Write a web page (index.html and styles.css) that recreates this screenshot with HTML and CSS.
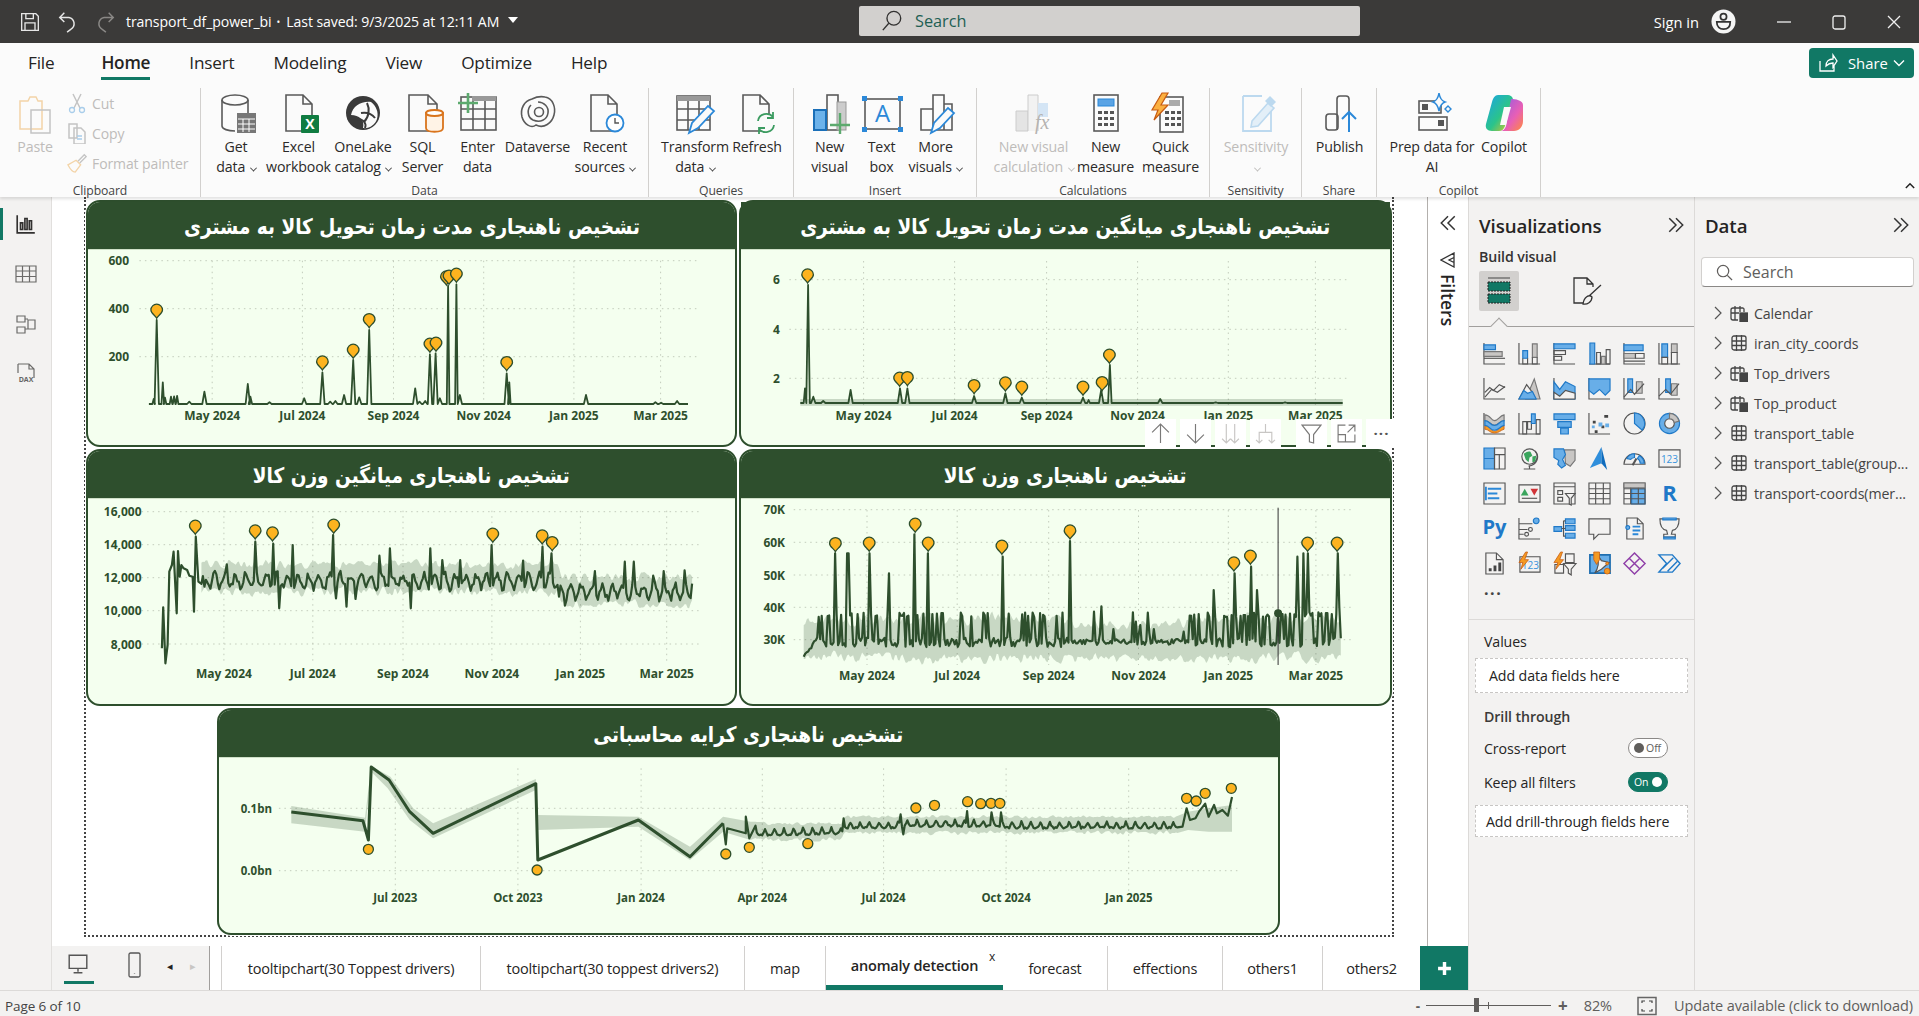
FILE: index.html
```html
<!DOCTYPE html>
<html lang="en">
<head>
<meta charset="utf-8">
<title>transport_df_power_bi</title>
<link rel="stylesheet" href="styles.css">
</head>
<body>
<div class="app">
  <header class="titlebar">
    <svg class="tb-ic" viewBox="0 0 24 24"><path d="M2 2h17l3 3v17H2zM7 2v6h9V2M6 22v-9h12v9"/></svg>
    <svg class="tb-ic undo" viewBox="0 0 24 24"><path d="M8 2 3 7l5 5M3 7h10a7 7 0 0 1 2 13l-4 3"/></svg>
    <svg class="tb-ic redo" viewBox="0 0 24 24"><path d="m16 2 5 5-5 5M21 7H11a7 7 0 0 0-2 13l4 3"/></svg>
    <span class="doc-title">transport_df_power_bi</span>
    <span class="doc-dot">•</span>
    <span class="doc-title">Last saved: 9/3/2025 at 12:11 AM</span>
    <span class="doc-caret"></span>
    <div class="searchbar">
      <svg viewBox="0 0 24 24"><circle cx="14" cy="9" r="7.500"/><path d="M8.500 14.500 2 22"/></svg>
      <span>Search</span>
    </div>
    <span class="signin">Sign in</span>
    <svg class="avatar" viewBox="0 0 26 26"><circle cx="13" cy="13" r="12.500" class="av-bg"/><circle cx="13" cy="8" r="3.200"/><path d="M6 13.500h14c0 5-3 7.500-7 7.500s-7-2.500-7-7.500z"/></svg>
    <svg class="win-ic win-min" viewBox="0 0 16 16"><path d="M1 8h14"/></svg>
    <svg class="win-ic win-max" viewBox="0 0 16 16"><rect x="2" y="2" width="12" height="13" rx="2"/></svg>
    <svg class="win-ic win-close" viewBox="0 0 16 16"><path d="m2 2 12 12M14 2 2 14"/></svg>
  </header>

  <section class="ribbon">
    <nav class="rtabs">
      <span class="rtab rtab-file">File</span>
      <span class="rtab rtab-on">Home</span>
      <span class="rtab">Insert</span>
      <span class="rtab">Modeling</span>
      <span class="rtab">View</span>
      <span class="rtab">Optimize</span>
      <span class="rtab">Help</span>
      <button class="share">
        <svg viewBox="0 0 20 20"><path d="M2 8v10h14v-5M8 13c0-5 3-7 7-7V2l4 6-4 6v-4c-3 0-5 1-7 3z"/></svg>
        <span>Share</span>
        <svg class="share-chev" viewBox="0 0 12 12"><path d="m1 3.500 5 5 5-5"/></svg>
      </button>
    </nav>
    <div class="rgroups">
      <div class="rgroup g-clip">
        <div class="ritems clip-items">
          <div class="rbtn off paste">
            <svg class="ric" viewBox="0 0 40 40"><path class="ln-o" d="M5 8h8l2-4h6l2 4h4v28H5z" fill="#fdf0dc"/><rect class="ln-gl" x="16" y="17" width="19" height="23" fill="#fafafa"/></svg>
            <span class="rl">Paste</span>
          </div>
          <div class="clip-list">
            <div class="clip-row"><svg viewBox="0 0 20 22"><path class="ln-gl" d="m6 2 7 14M14 2 7 16"/><circle class="ln-bl" cx="5" cy="18" r="2.500"/><circle class="ln-bl" cx="15" cy="18" r="2.500"/></svg><span>Cut</span></div>
            <div class="clip-row"><svg viewBox="0 0 20 22"><path class="ln-gl" d="M2 2h8v14H2z"/><path class="ln-gl" d="M7 6h7l4 4v12H7z" fill="#fafafa"/><path class="ln-bl" d="M10 14h5M10 17h5"/></svg><span>Copy</span></div>
            <div class="clip-row"><svg viewBox="0 0 22 22"><path class="ln-gl" d="m12 9 7-7 2 2-7 7"/><path class="ln-o" d="M1 13 10 8l5 5-6 8c-4 0-6-4-8-8z" fill="#fbdcb8"/></svg><span>Format painter</span></div>
          </div>
        </div>
        <div class="rglabel">Clipboard</div>
      </div>

      <div class="rgroup g-data">
        <div class="ritems">
          <div class="rbtn"><svg class="ric" viewBox="0 0 40 40"><ellipse class="ln" cx="19" cy="7" rx="13" ry="5"/><path class="ln" d="M6 7v26c0 3 6 5 13 5M32 7v13"/><rect x="21" y="20" width="19" height="20" fill="#777"/><path d="M22 26h17M22 31h17M22 36h17M27 26v13M33 26v13" stroke="#fff" stroke-width="1"/></svg><span class="rl">Get</span><span class="rl">data <i class="chev"></i></span></div>
          <div class="rbtn"><svg class="ric" viewBox="0 0 40 40"><path class="ln" d="M7 2h17l9 9v27H7zM24 2v9h9" fill="#fafafa"/><rect x="22" y="22" width="18" height="18" rx="1" fill="#107c41"/><text class="xl" x="31" y="36">X</text></svg><span class="rl">Excel</span><span class="rl">workbook</span></div>
          <div class="rbtn"><svg class="ric" viewBox="0 0 40 40"><circle cx="20" cy="20" r="17" fill="#3a3a3a"/><path d="M8 22c2-9 10-14 20-13 5 4 8 10 6 17-2 6-8 10-14 9 2-8-4-13-12-13z" fill="#fafafa"/><path d="M14 26c6 0 10 4 8 9M24 10c3 6 2 14-3 19M32 25c-3-4-8-6-14-5" fill="none" stroke="#3a3a3a" stroke-width="2"/></svg><span class="rl">OneLake</span><span class="rl">catalog <i class="chev"></i></span></div>
          <div class="rbtn"><svg class="ric" viewBox="0 0 40 40"><path class="ln" d="M6 2h19l9 9v27H6zM25 2v9h9" fill="#fafafa"/><path d="M23 20v15c0 5 17 5 17 0V20z" fill="#fff3e6" stroke="#d9741c" stroke-width="1.800"/><ellipse cx="31.500" cy="20" rx="8.500" ry="3" fill="#fff" stroke="#d9741c" stroke-width="1.800"/></svg><span class="rl">SQL</span><span class="rl">Server</span></div>
          <div class="rbtn"><svg class="ric" viewBox="0 0 40 40"><rect class="ln" x="3" y="4" width="35" height="33" fill="#fafafa"/><rect x="14" y="3" width="24" height="5" fill="#999"/><path class="ln" d="M3 16h35M3 26h35M15 8v29M27 8v29"/><path d="M10 0v20M0 10h20" stroke="#5caa6e" stroke-width="2.600" fill="none"/></svg><span class="rl">Enter</span><span class="rl">data</span></div>
          <div class="rbtn"><svg class="ric" viewBox="0 0 40 40"><path class="ln" stroke-width="2" d="M14 6C6 8 2 16 4 24c2 7 9 12 14 8 8 4 16-2 18-10 2-7-1-17-9-18-5-1-9 0-13 2z"/><path class="ln" stroke-width="2" d="M13 12c-4 4-4 12 2 15 7 3 14 0 15-7 1-6-4-11-10-11"/><circle class="ln" stroke-width="2" cx="21" cy="19" r="4.500"/></svg><span class="rl">Dataverse</span></div>
          <div class="rbtn"><svg class="ric" viewBox="0 0 40 40"><path class="ln" d="M6 2h17l9 9v27H6zM23 2v9h9" fill="#fafafa"/><circle cx="30" cy="30" r="8.500" fill="#fff" stroke="#2b88d8" stroke-width="1.800"/><path d="M30 25v5h4" fill="none" stroke="#555" stroke-width="1.400"/></svg><span class="rl">Recent</span><span class="rl">sources <i class="chev"></i></span></div>
        </div>
        <div class="rglabel">Data</div>
      </div>

      <div class="rgroup g-query">
        <div class="ritems">
          <div class="rbtn"><svg class="ric" viewBox="0 0 40 40"><rect class="ln" x="2" y="3" width="33" height="34"/><rect x="2" y="3" width="33" height="5" fill="#999"/><path class="ln" d="M2 16h33M2 27h33M13 8v29M24 8v29"/><path d="m14 40 3-10 16-17 6 5-16 17z" fill="#fafafa" stroke="#2b88d8" stroke-width="1.800"/></svg><span class="rl">Transform</span><span class="rl">data <i class="chev"></i></span></div>
          <div class="rbtn"><svg class="ric" viewBox="0 0 40 40"><path class="ln" d="M6 2h17l9 9v27H6zM23 2v9h9" fill="#fafafa"/><circle cx="29" cy="30" r="9" fill="#fafafa"/><path d="M21 28c1-8 11-9 15-4M37 32c-1 8-11 9-15 4M36 19v6h-6M22 41v-6h6" fill="none" stroke="#3b9b60" stroke-width="1.800"/></svg><span class="rl">Refresh</span></div>
        </div>
        <div class="rglabel">Queries</div>
      </div>

      <div class="rgroup g-insert">
        <div class="ritems">
          <div class="rbtn"><svg class="ric" viewBox="0 0 40 40"><rect x="17" y="2" width="11" height="35" class="ln"/><rect x="27" y="9" width="9" height="28" fill="#ccc" stroke="#999"/><rect x="4" y="17" width="12" height="20" fill="#6cb2ea" stroke="#1a6fb8" stroke-width="2"/><path d="M30 20v21M20 32h20" stroke="#5caa6e" stroke-width="2.400"/></svg><span class="rl">New</span><span class="rl">visual</span></div>
          <div class="rbtn"><svg class="ric" viewBox="0 0 40 40"><rect class="ln" x="3" y="6" width="35" height="30"/><path d="M0 3h5v5H0zM36 3h5v5h-5zM0 34h5v5H0zM36 34h5v5h-5z" fill="#2b88d8"/><text class="tbx" x="20.500" y="29">A</text></svg><span class="rl">Text</span><span class="rl">box</span></div>
          <div class="rbtn"><svg class="ric" viewBox="0 0 40 40"><path class="ln" d="M5 16h12v21H5zM17 37V2h11v35M28 11h8v26H5"/><path d="m15 40 3-10 14-15 6 5-14 15z" fill="#fafafa" stroke="#2b88d8" stroke-width="1.800"/></svg><span class="rl">More</span><span class="rl">visuals <i class="chev"></i></span></div>
        </div>
        <div class="rglabel">Insert</div>
      </div>

      <div class="rgroup g-calc">
        <div class="ritems">
          <div class="rbtn off"><svg class="ric" viewBox="0 0 40 40"><path d="M2 18h12v20H2z" fill="#e4e4e4" stroke="#ccc"/><path d="M14 38V2h10v36" fill="#f2f2f2" stroke="#ccc"/><path d="M24 10h10v14H24z" fill="#d4e5f5"/><text class="fx" x="21" y="36">fx</text></svg><span class="rl">New visual</span><span class="rl">calculation <i class="chev"></i></span></div>
          <div class="rbtn"><svg class="ric" viewBox="0 0 40 40"><rect class="ln" stroke-width="2" x="8" y="2" width="24" height="36"/><rect x="12" y="6" width="16" height="7" fill="#5ba4e5" stroke="#2b88d8"/><path d="M12 18h4v3h-4zM18 18h4v3h-4zM24 18h4v3h-4zM12 24h4v3h-4zM18 24h4v3h-4zM24 24h4v3h-4zM12 30h4v3h-4zM18 30h4v3h-4zM24 30h4v3h-4z" fill="#555"/></svg><span class="rl">New</span><span class="rl">measure</span></div>
          <div class="rbtn"><svg class="ric" viewBox="0 0 40 40"><rect class="ln" stroke-width="2" x="9" y="4" width="23" height="35"/><rect x="18" y="7" width="11" height="6" fill="#aaa"/><path d="M14 18h4v3h-4zM20 18h4v3h-4zM26 18h4v3h-4zM14 24h4v3h-4zM20 24h4v3h-4zM26 24h4v3h-4zM14 30h4v3h-4zM20 30h4v3h-4zM26 30h4v3h-4z" fill="#555"/><path d="M11 0 1 17h6l-4 10L17 12h-7l7-12z" fill="#fbb040" stroke="#c75b12" stroke-width="1.200"/></svg><span class="rl">Quick</span><span class="rl">measure</span></div>
        </div>
        <div class="rglabel">Calculations</div>
      </div>

      <div class="rgroup g-sens">
        <div class="ritems">
          <div class="rbtn off"><svg class="ric" viewBox="0 0 40 40"><path d="M7 3h19M35 18v20H7V3" fill="none" stroke="#bcd9ef" stroke-width="1.800"/><path d="m16 28 16-18 6 5-16 18-7 1z" fill="#e3eff8" stroke="#bcd9ef" stroke-width="1.600"/><path d="m29 8 5-5 6 6-5 5z" fill="#bcd9ef"/></svg><span class="rl">Sensitivity</span><span class="rl"><i class="chev"></i></span></div>
        </div>
        <div class="rglabel">Sensitivity</div>
      </div>

      <div class="rgroup g-share">
        <div class="ritems">
          <div class="rbtn"><svg class="ric" viewBox="0 0 40 40"><path class="ln" stroke-width="2" d="M17 37V6a3 3 0 0 1 3-3h6a3 3 0 0 1 3 3v19"/><rect class="ln" stroke-width="2" x="6" y="21" width="12" height="16" rx="3"/><path d="M29 39V20M22 26l7-7 7 7" fill="none" stroke="#2b88d8" stroke-width="2"/></svg><span class="rl">Publish</span></div>
        </div>
        <div class="rglabel">Share</div>
      </div>

      <div class="rgroup g-copilot">
        <div class="ritems">
          <div class="rbtn"><svg class="ric" viewBox="0 0 40 40"><rect class="ln" x="7" y="8" width="22" height="12"/><rect x="10" y="11" width="6" height="6" fill="#555"/><rect class="ln" x="7" y="24" width="28" height="13"/><rect x="26" y="27" width="6" height="6" fill="#555"/><path d="M27 0c1 6 3 8 6 9-3 1-5 4-6 9-1-5-3-8-6-9 3-1 5-3 6-9z" fill="#fafafa" stroke="#2b88d8" stroke-width="1.500"/><path d="M36 13l3 3-3 3-3-3z" fill="#fafafa" stroke="#2b88d8" stroke-width="1.400"/></svg><span class="rl">Prep data for</span><span class="rl">AI</span></div>
          <div class="rbtn"><svg class="ric" viewBox="0 0 40 40"><defs><linearGradient id="cpA" x1="0" y1="0" x2="1" y2="1"><stop offset="0" stop-color="#1aa3e8"/><stop offset=".55" stop-color="#2bc48a"/><stop offset="1" stop-color="#f5c518"/></linearGradient><linearGradient id="cpB" x1="0" y1="0" x2="1" y2="1"><stop offset="0" stop-color="#8d5be8"/><stop offset=".6" stop-color="#e85fb5"/><stop offset="1" stop-color="#ff8a3c"/></linearGradient></defs><path d="M14 2h10c2 0 4 1 5 4l-8 27c-1 3-3 5-6 5h-7c-5 0-7-3-6-7l6-22c1-4 3-7 6-7z" fill="url(#cpA)"/><path d="M27 6c4 0 12 1 12 6v16c0 6-4 10-9 10H16c3 0 5-2 6-5z" fill="url(#cpB)"/><path d="M20 14h7l-5 18h-6z" fill="#fafafa"/></svg><span class="rl">Copilot</span></div>
        </div>
        <div class="rglabel">Copilot</div>
      </div>
      <svg class="collapse" viewBox="0 0 12 8"><path d="m1 7 5-5 5 5"/></svg>
    </div>
  </section>

  <main class="workspace">
    <aside class="rail">
      <div class="rail-btn rail-on"><svg viewBox="0 0 20 20"><path d="M2 2v16h16M5 15V9h2v6zM9 15V5h2v10zM13 15V7h2v8z"/></svg></div>
      <div class="rail-btn"><svg viewBox="0 0 22 20"><path d="M1 2h20v16H1zM1 7h20M1 12.500h20M7.500 2v16M14.500 2v16"/></svg></div>
      <div class="rail-btn"><svg viewBox="0 0 22 22"><path d="M2 3h8v6H2zM2 14h8v6H2zM13 7h7v9h-7zM10 6h3M10 16h3"/></svg></div>
      <div class="rail-btn"><svg viewBox="0 0 22 24"><path d="M3 2h11l5 5v9M3 2v9M14 2v5h5"/><text class="dax" x="11" y="20">DAX</text></svg></div>
    </aside>

    <div class="center">
      <div class="center-top">
        <div class="canvas">
          <div class="page">
            <article class="card">
              <h2 class="card-title" dir="rtl"><span>تشخیص ناهنجاری مدت زمان تحویل کالا به مشتری</span></h2>
              <svg class="chart" data-chart="delivery"></svg>
            </article>
            <article class="card card-tools">
              <h2 class="card-title" dir="rtl"><span>تشخیص ناهنجاری میانگین مدت زمان تحویل کالا به مشتری</span></h2>
              <svg class="chart" data-chart="avgDelivery"></svg>
              <div class="visual-tools">
                <span class="vt"><svg viewBox="0 0 20 20"><path d="M10 19V1M2 9l8-8 8 8"/></svg></span>
                <span class="vt"><svg viewBox="0 0 20 20"><path d="M10 1v18M2 11l8 8 8-8"/></svg></span>
                <span class="vt vt-off"><svg viewBox="0 0 20 20"><path d="M6 1v18M14 1v18M2 15l4 4 4-4M10 15l4 4 4-4"/></svg></span>
                <span class="vt vt-off vt-last"><svg viewBox="0 0 20 20"><path d="M10 1v8M4 19v-10h12v10M1 16l3 3 3-3M13 16l3 3 3-3"/></svg></span>
                <span class="vt"><svg viewBox="0 0 20 20"><path d="M1 2h18l-7 9v8l-4-1v-7z"/></svg></span>
                <span class="vt"><svg viewBox="0 0 20 20"><path d="M9 2H2v16h16v-7M2 11h7v7M12 2h6v6M18 2l-7 7"/></svg></span>
                <span class="vt vt-more">···</span>
              </div>
            </article>
            <article class="card card-tall">
              <h2 class="card-title" dir="rtl"><span>تشخیص ناهنجاری میانگین وزن کالا</span></h2>
              <svg class="chart" data-chart="avgWeight"></svg>
            </article>
            <article class="card card-tall">
              <h2 class="card-title" dir="rtl"><span>تشخیص ناهنجاری وزن کالا</span></h2>
              <svg class="chart" data-chart="weight"></svg>
            </article>
            <article class="card card-wide">
              <h2 class="card-title" dir="rtl"><span>تشخیص ناهنجاری کرایه محاسباتی</span></h2>
              <svg class="chart" data-chart="fare"></svg>
            </article>
          </div>
        </div>
        <aside class="filters">
          <svg class="dchev" viewBox="0 0 16 16"><path d="M8 2 2 8l6 6M14 2 8 8l6 6"/></svg>
          <svg class="funnel" viewBox="0 0 16 16"><path d="M14 1v14L1 8zM14 5.500 9 8l5 2.500"/></svg>
          <span class="filters-label">Filters</span>
        </aside>
      </div>
      <div class="pagebar">
        <div class="devices">
          <div class="dev dev-on"><svg viewBox="0 0 20 20"><path d="M2 2h16v12H2zM10 14v3M6 18h8"/></svg></div>
          <div class="dev"><svg viewBox="0 0 14 26"><rect x="1.500" y="1" width="11" height="24" rx="1.500"/><path d="M7 21v.5"/></svg></div>
          <span class="pg-arrow">◂</span>
          <span class="pg-arrow pg-arrow-off">▸</span>
        </div>
        <div class="tabs">
          <span class="tab t1">tooltipchart(30 Toppest drivers)</span>
          <span class="tab t2">tooltipchart(30 toppest drivers2)</span>
          <span class="tab t3">map</span>
          <span class="tab t4 tab-on">anomaly detection<i class="tab-x">x</i></span>
          <span class="tab t5">forecast</span>
          <span class="tab t6">effections</span>
          <span class="tab t7">others1</span>
          <span class="tab t8">others2</span>
        </div>
        <div class="addtab"><svg viewBox="0 0 14 14"><path d="M7 1v12M1 7h12"/></svg></div>
      </div>
    </div>

    <aside class="viz">
      <div class="pane-head"><h3>Visualizations</h3><svg class="dchev" viewBox="0 0 16 16"><path d="m8 2 6 6-6 6M2 2l6 6-6 6"/></svg></div>
      <div class="build-label">Build visual</div>
      <div class="build-row">
        <span class="build-btn build-on"><svg viewBox="0 0 32 32"><path d="M5 3h22" stroke="#444" fill="none"/><rect x="5" y="7" width="22" height="9" fill="#117865" stroke="#222" stroke-dasharray="2 1"/><rect x="5" y="19" width="22" height="9" fill="#117865" stroke="#222" stroke-dasharray="2 1"/></svg></span>
        <span class="build-btn build-fmt"><svg viewBox="0 0 32 32"><path d="M12 28H3V3h13l6 6v3M16 3v6h6" fill="none" stroke="#333" stroke-width="1.300"/><path d="m30 10-12 11M21 22c-3-3-8 0-9 7 4 1 9-2 9-7z" fill="none" stroke="#333" stroke-width="1.300"/></svg></span>
      </div>
      <div class="viz-rule"></div>
      <div class="viz-grid">
        <svg class="vi" viewBox="0 0 24 24"><path d="M1 1v22h22"/><path class="b" d="M1 3h12v5H1z"/><path class="g" d="M1 10h19v5H1z"/><path d="M1 17h22"/></svg>
        <svg class="vi" viewBox="0 0 24 24"><path d="M1 1v22h22"/><path class="b" d="M5 9h5v8H5z"/><path d="M5 17v6h5v-6"/><path class="g" d="M15 2h5v14h-5z"/><path d="M15 16v7h5v-7"/></svg>
        <svg class="vi" viewBox="0 0 24 24"><path d="M1 1v22h22"/><path class="b" d="M1 2h22v5H1z"/><path d="M1 9h12v4H1zM1 15h8v4H1z"/></svg>
        <svg class="vi" viewBox="0 0 24 24"><path d="M1 23h22"/><path class="b" d="M2 1h5v22H2z"/><path d="M9 11h4v12H9z"/><path class="g" d="M14 15h4v8h-4z"/><path d="M19 8h4v15h-4z"/></svg>
        <svg class="vi" viewBox="0 0 24 24"><path d="M1 1v22h22"/><path class="b" d="M1 3h20v6H1z"/><path class="g" d="M1 12h12v5H1z"/><path d="M13 12h9v5h-9zM1 20h22"/></svg>
        <svg class="vi" viewBox="0 0 24 24"><path d="M1 1v22h22"/><path class="b" d="M4 2h6v14H4z"/><path d="M4 16h6v7H4z"/><path class="g" d="M14 2h6v9h-6z"/><path d="M14 11h6v12h-6z"/></svg>

        <svg class="vi" viewBox="0 0 24 24"><path d="M1 1v22h22M2 16l5-5 4 3 6-6 6 3"/><path d="M2 21l7-8 6 3 8-6"/></svg>
        <svg class="vi" viewBox="0 0 24 24"><path class="g" d="M8 23 17 2l6 21z"/><path class="w" d="M1 23 9 8l6 8 3 7z"/><path class="b" d="M1 23l5-9 4 3 5-2 4 8z"/></svg>
        <svg class="vi" viewBox="0 0 24 24"><path d="M1 1v22h22"/><path class="b" d="M1 5l6 8 6-8 10 5v13H1z"/><path class="w" d="M1 16l6 4 6-6 10 3v6H1z"/></svg>
        <svg class="vi" viewBox="0 0 24 24"><path d="M1 1v22h22"/><path class="b" d="M1 2h22v12l-5 5-6-6-6 5-5-4z"/></svg>
        <svg class="vi" viewBox="0 0 24 24"><path d="M1 1v22h22"/><path class="b" d="M5 2h5v14H5z"/><path class="g" d="M14 5h6v12h-6z"/><path d="M1 21l7-8 4 5 10-11"/></svg>
        <svg class="vi" viewBox="0 0 24 24"><path d="M1 1v22h22"/><path class="b" d="M8 2h5v14H8z"/><path class="g" d="M14 7h6v12h-6z"/><path d="M1 20l7-7 5 5 9-11"/></svg>

        <svg class="vi" viewBox="0 0 24 24"><path d="M1 1v22h22"/><path class="o" d="M2 14c5 0 5 6 10 6s5-5 10-6v4c-4 1-5 4-10 4s-6-4-10-4z"/><path class="g" d="M2 3c6 0 6 6 10 6s5-5 10-6v6c-5 0-6 5-10 5s-5-5-10-5z"/><path class="b" d="M2 9c5 0 5 5 10 5s5-5 10-5v5c-5 1-5 5-10 5s-5-5-10-5z"/></svg>
        <svg class="vi" viewBox="0 0 24 24"><path d="M1 1v22h22"/><path d="M5 10h4v13H5zM10 10h4v8h-4zM19 8h4v15h-4z"/><path class="b" d="M14 2h4v10h-4z"/></svg>
        <svg class="vi" viewBox="0 0 24 24"><path class="b" d="M1 2h22v6H1zM5 10h14v6H5zM8 17h8v6H8z"/></svg>
        <svg class="vi" viewBox="0 0 24 24"><path d="M1 1v22h22"/><path class="sq" d="M5 9h3v3H5zM14 14h3v3h-3zM17 3h4v3h-4zM7 19h3v3H7z"/><path class="bf" d="M11 11h4v4h-4zM18 12h4v4h-4zM4 14h3v3H4z"/></svg>
        <svg class="vi" viewBox="0 0 24 24"><circle cx="12" cy="12" r="11"/><path class="b" d="M12 12V1a11 11 0 0 1 8 18z"/></svg>
        <svg class="vi" viewBox="0 0 24 24"><circle class="b" cx="12" cy="12" r="10.500"/><circle class="w" cx="12" cy="12" r="5"/><path class="g" d="M12 1.500a10.500 10.500 0 0 1 10 8l-5 1.500a5 5 0 0 0-5-4z"/></svg>

        <svg class="vi" viewBox="0 0 24 24"><path class="b" d="M1 1h11v11H1zM1 12h11v11H1z"/><path d="M12 1h11v7H12zM12 8h5v15h-5zM17 8h6v15h-6z"/></svg>
        <svg class="vi" viewBox="0 0 24 24"><circle cx="12" cy="10" r="8"/><path class="gr" d="M6 7c3-2 5-3 7-2l2 4-3 2-1 5-3-3z"/><path class="gr" d="m15 10 4-1-1 6-3 1z"/><path d="M6 23h12M12 19v4M18 4c5 6 2 15-7 16"/></svg>
        <svg class="vi" viewBox="0 0 24 24"><path class="g" d="M12 3h11v11l-5 6-5-3z"/><path class="b" d="M1 2h10l2 6-3 5 3 6-4 3-4-4 1-4-5-3z"/></svg>
        <svg class="vi" viewBox="0 0 24 24"><path class="az1" d="M14 0 2 22l12-5z"/><path class="az2" d="M14 0v17l6 7z"/></svg>
        <svg class="vi" viewBox="0 0 24 24"><path d="M1 18a11 11 0 0 1 22 0H1z"/><path class="b" d="M4 12a9 9 0 0 1 8-5V11a6 6 0 0 0-4 2z"/><path class="b" d="M17 9a9 9 0 0 1 5 8h-4a6 6 0 0 0-3-5z"/><path d="m10 19 4-7" stroke-width="2.200"/></svg>
        <svg class="vi" viewBox="0 0 24 24"><path d="M1 3h22v18H1z"/><text class="vi-num" x="12" y="16.500">123</text></svg>

        <svg class="vi" viewBox="0 0 24 24"><path d="M1 1h22v22H1z"/><path class="thick-b" d="M5 7h14M5 12h10M5 17h12M3 5v14"/></svg>
        <svg class="vi" viewBox="0 0 24 24"><path d="M1 3h22v18H1z"/><path class="grn" d="m7 7 4 7H3z"/><path class="red" d="M13 7h8l-4 7z"/><path d="M4 17h16"/></svg>
        <svg class="vi" viewBox="0 0 24 24"><path d="M1 1h22v22H1zM1 5h22M5 9h5v4H5zM5 16h5v4H5z"/><path d="M13 12h10l-4 5v7l-2-1v-6z" class="w"/></svg>
        <svg class="vi" viewBox="0 0 24 24"><path d="M1 1h22v22H1zM1 7h22M1 12h22M1 17.500h22M8 1v22M16 1v22"/></svg>
        <svg class="vi" viewBox="0 0 24 24"><path class="b" d="M9 7h14v16H9z"/><path d="M1 1h22v22H1zM1 7h22M1 12h22M1 17.500h22M8 1v22M16 1v22"/><path class="g" d="M1 1h22v5H1z"/></svg>
        <svg class="vi" viewBox="0 0 24 24"><text class="vi-r" x="12" y="20">R</text></svg>

        <svg class="vi" viewBox="0 0 24 24"><text class="vi-py" x="12" y="18">Py</text></svg>
        <svg class="vi" viewBox="0 0 24 24"><path d="M1 1v22h22M1 7h14M1 13h9M1 18h5"/><circle cx="19" cy="4" r="3" class="b"/><circle cx="13" cy="13" r="2"/><circle cx="9" cy="18" r="2"/></svg>
        <svg class="vi" viewBox="0 0 24 24"><path class="b" d="M1 10h8v5H1zM13 2h10v5H13zM13 9h10v5H13zM13 17h10v5H13z"/><path d="M9 12h4M11 4v16h2M11 4h2"/></svg>
        <svg class="vi" viewBox="0 0 24 24"><path d="M1 2h22v16H11l-5 5v-5H1z"/></svg>
        <svg class="vi" viewBox="0 0 24 24"><path d="M4 1h11l6 6v16H4zM15 1v6h6"/><path class="thick-b" d="M10 10h8M10 14h8M10 18h6"/><circle class="b" cx="5" cy="11" r="2"/></svg>
        <svg class="vi" viewBox="0 0 24 24"><path d="M2 2h20c0 7-2 11-7 12l-1 4h4v3H6v-3h4l-1-4C4 13 2 9 2 2z"/><path class="b" d="M6 21h12v2H6zM5 1h14v2H5z"/></svg>

        <svg class="vi" viewBox="0 0 24 24"><path d="M3 1h11l7 7v15H3zM14 1v7h7"/><path class="sq" d="M6 17h3v3H6zM11 14h3v6h-3zM16 11h3v9h-3z"/></svg>
        <svg class="vi" viewBox="0 0 24 24"><path d="M2 5h21v16H2z"/><text class="vi-num" x="13" y="18">123</text><path class="o" d="M8 0 1 11h4l-2 7 8-10H7l3-8z"/></svg>
        <svg class="vi" viewBox="0 0 24 24"><path d="M13 2h9v9h-9zM2 13h9v9H2z"/><path class="w" d="M11 12h13l-5 6v6l-3-2v-4z"/><path class="o" d="M8 0 1 11h4l-2 7 8-10H7l3-8z"/></svg>
        <svg class="vi" viewBox="0 0 24 24"><path class="bd" d="M2 3h21v19H2z"/><path class="w" d="M10 3l4 6 8 2-8 7-7 4c4-5 5-10 3-19z"/><path class="o" d="M6 0h6v8l-3 5-3-5z"/><circle class="o" cx="20" cy="20" r="3"/><circle class="o" cx="20" cy="12" r="1.500"/></svg>
        <svg class="vi vi-purple" viewBox="0 0 24 24"><path d="m12 1 11 11-11 11L1 12zM6.500 6.500l11 11M17.500 6.500l-11 11"/></svg>
        <svg class="vi vi-flow" viewBox="0 0 24 24"><path d="M1 3h14l8 9-8 9H1l8-9zM5 17l11-11M10 20l10-10"/></svg>
      </div>
      <div class="viz-more">···</div>
      <div class="viz-fields">
        <div class="fld-label fld-values">Values</div>
        <div class="dropbox">Add data fields here</div>
        <div class="fld-label fld-drill">Drill through</div>
        <div class="toggle-row tr-first"><span>Cross-report</span><span class="toggle">Off</span></div>
        <div class="toggle-row"><span>Keep all filters</span><span class="toggle toggle-on">On</span></div>
        <div class="dropbox dropbox-drill">Add drill-through fields here</div>
      </div>
    </aside>

    <aside class="data">
      <div class="pane-head"><h3>Data</h3><svg class="dchev" viewBox="0 0 16 16"><path d="m8 2 6 6-6 6M2 2l6 6-6 6"/></svg></div>
      <div class="data-search"><svg viewBox="0 0 18 18"><circle cx="7.500" cy="7.500" r="6"/><path d="m12 12 5 5"/></svg><span>Search</span></div>
      <ul class="tree">
        <li><svg class="tree-chev" viewBox="0 0 10 16"><path d="m2 2 6 6-6 6"/></svg><svg class="tree-ic" viewBox="0 0 18 18"><path d="M3 4h10a2 2 0 0 1 1 1v3M3 4a2 2 0 0 0-2 2v8a2 2 0 0 0 2 2h5M1 9h8M5 2v14M10 2v6"/><rect x="10" y="9" width="8" height="9" fill="#444"/></svg>Calendar</li>
        <li><svg class="tree-chev" viewBox="0 0 10 16"><path d="m2 2 6 6-6 6"/></svg><svg class="tree-ic" viewBox="0 0 18 18"><rect x="2" y="2" width="14" height="14" rx="2"/><path d="M2 7h14M2 11.500h14M6.500 1v16M11.500 1v16"/></svg>iran_city_coords</li>
        <li><svg class="tree-chev" viewBox="0 0 10 16"><path d="m2 2 6 6-6 6"/></svg><svg class="tree-ic" viewBox="0 0 18 18"><path d="M3 4h10a2 2 0 0 1 1 1v3M3 4a2 2 0 0 0-2 2v8a2 2 0 0 0 2 2h5M1 9h8M5 2v14M10 2v6"/><rect x="10" y="9" width="8" height="9" fill="#444"/></svg>Top_drivers</li>
        <li><svg class="tree-chev" viewBox="0 0 10 16"><path d="m2 2 6 6-6 6"/></svg><svg class="tree-ic" viewBox="0 0 18 18"><path d="M3 4h10a2 2 0 0 1 1 1v3M3 4a2 2 0 0 0-2 2v8a2 2 0 0 0 2 2h5M1 9h8M5 2v14M10 2v6"/><rect x="10" y="9" width="8" height="9" fill="#444"/></svg>Top_product</li>
        <li><svg class="tree-chev" viewBox="0 0 10 16"><path d="m2 2 6 6-6 6"/></svg><svg class="tree-ic" viewBox="0 0 18 18"><rect x="2" y="2" width="14" height="14" rx="2"/><path d="M2 7h14M2 11.500h14M6.500 1v16M11.500 1v16"/></svg>transport_table</li>
        <li><svg class="tree-chev" viewBox="0 0 10 16"><path d="m2 2 6 6-6 6"/></svg><svg class="tree-ic" viewBox="0 0 18 18"><rect x="2" y="2" width="14" height="14" rx="2"/><path d="M2 7h14M2 11.500h14M6.500 1v16M11.500 1v16"/></svg>transport_table(group...</li>
        <li><svg class="tree-chev" viewBox="0 0 10 16"><path d="m2 2 6 6-6 6"/></svg><svg class="tree-ic" viewBox="0 0 18 18"><rect x="2" y="2" width="14" height="14" rx="2"/><path d="M2 7h14M2 11.500h14M6.500 1v16M11.500 1v16"/></svg>transport-coords(mer...</li>
      </ul>
    </aside>
  </main>

  <footer class="status">
    <span class="page-count">Page 6 of 10</span>
    <div class="zoomer">
      <span class="z-minus">-</span>
      <span class="z-track"><i class="z-tick"></i><i class="z-thumb"></i></span>
      <span class="z-plus">+</span>
      <span class="z-val">82%</span>
      <svg class="z-fit" viewBox="0 0 20 20"><rect x="1" y="1.500" width="18" height="17" stroke="#666" stroke-width="1.500"/><path d="M5 7V5h3M12 5h3v2M15 13v2h-3M8 15H5v-2"/></svg>
      <span class="z-update">Update available (click to download)</span>
    </div>
  </footer>
</div>
<script src="charts.js"></script>
</body>
</html>
```

FILE: styles.css
```css
* { box-sizing: border-box; }
html, body { margin: 0; padding: 0; }
body { background: #fff; color: #252423; font-family: "Open Sans", "Noto Sans", sans-serif; font-size: 14.200px; overflow: hidden; }
svg { display: block; }
.app { width: 1919px; height: 1016px; display: flex; flex-direction: column; overflow: hidden; }

/* title bar */
.titlebar { height: 43px; flex: none; background: #3b3a39; color: #fff; display: flex; align-items: center; padding-left: 20px; position: relative; }
.tb-ic { width: 20px; height: 20px; fill: none; stroke: #e6e6e6; stroke-width: 1.600; flex: none; }
.tb-ic.undo { width: 22px; height: 22px; margin-left: 17px; }
.tb-ic.redo { width: 22px; height: 22px; margin-left: 15px; stroke: #8a8886; margin-right: 10px; }
.doc-title { font-size: 14.100px; white-space: nowrap; letter-spacing: -.1px; }
.doc-dot { margin: 0 6px 0 5px; font-size: 10px; }
.doc-caret { width: 0; height: 0; border-left: 5.500px solid transparent; border-right: 5.500px solid transparent; border-top: 6px solid #fff; margin: -4px 0 0 9px; }
.searchbar { position: absolute; left: 859px; top: 6px; width: 501px; height: 30px; background: #d2d0ce; border-radius: 2px; display: flex; align-items: center; padding-left: 22px; color: #1e5f54; font-size: 16.300px; }
.searchbar svg { width: 22px; height: 22px; fill: none; stroke: #323130; stroke-width: 1.500; margin-right: 12px; }
.signin { margin-left: auto; font-size: 14.700px; }
.avatar { width: 25px; height: 25px; margin-left: 12px; fill: none; stroke: #333; stroke-width: 1.800; }
.av-bg { fill: #f5f5f5; stroke: none; }
.win-ic { width: 16px; height: 16px; fill: none; stroke: #f0f0f0; stroke-width: 1.300; }
.win-min { margin-left: 40px; }
.win-max { margin-left: 39px; }
.win-close { margin-left: 39px; margin-right: 17px; }

/* ribbon */
.ribbon { height: 154px; flex: none; background: #fbfbfb; position: relative; z-index: 3; box-shadow: 0 2px 3px rgba(0,0,0,.12); }
.rtabs { height: 45px; display: flex; align-items: flex-start; padding-left: 28px; gap: 39px; }
.rtab { font-size: 17.200px; line-height: 22px; margin-top: 9px; padding-bottom: 3px; border-bottom: 3px solid transparent; letter-spacing: -.2px; white-space: nowrap; }
.rtab-file { margin-right: 8px; }
.rtab-on { font-weight: 600; border-bottom-color: #117865; }
.share { margin: 5px 5px 0 auto; width: 105px; height: 30px; background: #117865; border: 0; border-radius: 4px; color: #fff; font: 14.800px "Open Sans", sans-serif; display: flex; align-items: center; padding: 0 0 0 9px; }
.share svg { width: 20px; height: 20px; fill: none; stroke: #fff; stroke-width: 1.300; margin-right: 10px; }
.share .share-chev { width: 12px; height: 12px; margin: 0 0 0 5px; stroke-width: 1.400; }
.rgroups { height: 109px; display: flex; position: relative; }
.rgroup { display: flex; flex-direction: column; border-right: 1px solid #d2d0ce; }
.ritems { height: 97px; display: grid; grid-auto-flow: column; align-items: start; }
.rglabel { font-size: 12.200px; line-height: 12px; text-align: center; color: #444; letter-spacing: -.1px; }
.g-clip { width: 201px; }
.g-data { width: 448px; }
.g-data .ritems { padding-left: 5px; grid-template-columns: 60px 65px 64px 55px 55px 65px 70px; }
.g-query { width: 145px; }
.g-query .ritems { padding-left: 15px; grid-template-columns: 62px 62px; }
.g-insert { width: 183px; }
.g-insert .ritems { padding-left: 10px; grid-template-columns: 51px 53px 55px; }
.g-calc { width: 233px; }
.g-calc .ritems { padding-left: 19px; grid-template-columns: 75px 69px 61px; }
.g-sens { width: 92px; }
.g-sens .ritems { grid-template-columns: 92px; }
.g-share { width: 75px; }
.g-share .ritems { grid-template-columns: 75px; }
.g-copilot { width: 164px; }
.g-copilot .ritems { padding-left: 19px; grid-template-columns: 72px 72px; }
.rbtn { display: flex; flex-direction: column; align-items: center; padding-top: 5px; white-space: nowrap; min-width: 0; }
.ric { width: 40px; height: 40px; flex: none; margin-bottom: 4px; overflow: visible; }
.rl { font-size: 14.200px; line-height: 20px; color: #2b2a29; letter-spacing: -.15px; height: 20px; }
.off .rl, .clip-row span { color: #bebcba; }
.ln { fill: none; stroke: #5a5a5a; stroke-width: 1.600; }
.ln[fill] { fill: #fafafa; }
.ln-gl { fill: none; stroke: #c4c4c4; stroke-width: 1.500; }
.ln-bl { fill: none; stroke: #a9cdea; stroke-width: 1.300; }
.ln-o { fill: none; stroke: #f3d4a8; stroke-width: 1.500; }
.chev { display: inline-block; width: 5px; height: 5px; border-right: 1.400px solid #444; border-bottom: 1.400px solid #444; transform: rotate(45deg) translate(-1px,-1px); margin-left: 2px; }
.off .chev { border-color: #bebcba; }
.xl { fill: #fff; font: 700 14px "Open Sans", sans-serif; text-anchor: middle; }
.tbx { fill: #2b88d8; font: 400 24px "Open Sans", sans-serif; text-anchor: middle; }
.fx { fill: #b5b3b1; font: italic 400 20px "Liberation Serif", serif; }
.clip-items { grid-template-columns: 66px 1fr; }
.paste { padding-left: 4px; }
.clip-list { display: flex; flex-direction: column; padding-top: 0; }
.clip-row { height: 30px; display: flex; align-items: center; gap: 5px; }
.clip-row svg { width: 20px; height: 22px; flex: none; margin-left: 1px; }
.clip-row span { font-size: 14px; letter-spacing: -.1px; }
.collapse { position: absolute; right: 4px; bottom: 8px; width: 10px; height: 7px; fill: none; stroke: #222; stroke-width: 1.800; }

/* workspace */
.workspace { height: 793px; flex: none; display: flex; }
.rail { width: 52px; flex: none; background: #f3f2f1; border-right: 1px solid #e1dfdd; padding-top: 2px; }
.rail-btn { height: 50px; display: flex; align-items: center; justify-content: center; position: relative; }
.rail-btn svg { width: 22px; height: 24px; fill: none; stroke: #6b6a69; stroke-width: 1.200; }
.rail-on svg { stroke: #323130; stroke-width: 1.500; }
.rail-on::before { content: ""; position: absolute; left: 0; top: 9px; bottom: 9px; width: 3px; background: #117865; }
.dax { fill: #666; stroke: none; font: 700 7px "Open Sans", sans-serif; text-anchor: middle; }
.center { width: 1416px; flex: none; display: flex; flex-direction: column; }
.center-top { height: 749px; display: flex; }
.canvas { width: 1375px; background: #fff; padding-left: 32px; overflow: hidden; }
.page { width: 1310px; height: 740px; border: 2px dotted #444; border-top: 0; display: grid; grid-template-columns: 651px 653px; grid-template-rows: 247px 257px 227px; gap: 2px; padding-top: 3px; align-content: start; }
.card { position: relative; background: #f4ffef; border: 2px solid #2e4f2d; border-radius: 14px; overflow: hidden; display: flex; flex-direction: column; box-shadow: 0 0 0 1px #fff; }
.card-wide { grid-column: 1 / -1; width: 1063px; margin-left: 131px; }
.card-title { margin: 0; height: 48px; flex: none; background: #2e4f2d; color: #fff; font: 700 21.500px/49px "DejaVu Sans", sans-serif; text-align: center; border-bottom: 1px solid #cfe0c8; white-space: nowrap; }
.card-title span { display: inline-block; transform: scaleX(.86); }
.chart { flex: 1; width: 100%; min-height: 0; overflow: visible; }
.card-tools { overflow: visible; }
.visual-tools { position: absolute; left: 404px; top: 217px; height: 28px; display: flex; gap: 4px; }
.vt { width: 31px; height: 28px; background: #fff; display: flex; align-items: center; justify-content: center; }
.vt svg { width: 21px; height: 21px; fill: none; stroke: #7a7978; stroke-width: 1.100; }
.vt-off svg { stroke: #c8c6c4; }
.vt-last { margin-right: 11px; }
.vt-more { font-weight: 700; font-size: 15px; color: #555; letter-spacing: 1px; }
.grid-line { stroke: #c3ccbc; stroke-width: 1; stroke-dasharray: 1.500 4; fill: none; }
.axis-label { fill: #2e4f2d; font: 700 12px "Open Sans", sans-serif; }
.axis-sm { font-size: 11.500px; }
.series-line { fill: none; stroke: #2e4f2d; stroke-width: 2.200; stroke-linejoin: round; }
.series-thin { stroke-width: 1.800; }
.series-thick { stroke-width: 3; }
.series-band { fill: #2e4f2d; fill-opacity: .22; stroke: none; }
.pin { fill: #fdb31f; stroke: #2e4f2d; stroke-width: 1.300; }
.cursor { stroke: #333; stroke-width: 1; }
.cursor-dot { fill: #2e4f2d; }

/* filters */
.filters { width: 41px; flex: none; background: #fff; border-left: 1.500px solid #b3b0ad; display: flex; flex-direction: column; align-items: center; padding-top: 17px; }
.dchev { width: 18px; height: 18px; fill: none; stroke: #333; stroke-width: 1.300; flex: none; }
.funnel { width: 16px; height: 16px; fill: none; stroke: #333; stroke-width: 1.300; margin-top: 20px; }
.filters-label { writing-mode: vertical-rl; font-weight: 600; font-size: 17.500px; margin-top: 6px; color: #252423; }

/* page bar */
.pagebar { height: 44px; flex: none; display: flex; background: #fff; }
.devices { width: 158px; flex: none; background: #f3f2f1; border-right: 1px solid #a19f9d; display: flex; align-items: flex-start; position: relative; }
.dev { width: 32px; height: 44px; display: flex; justify-content: center; padding-top: 7px; margin-left: 10px; }
.dev svg { width: 22px; height: 22px; fill: none; stroke: #555; stroke-width: 1.300; }
.dev + .dev { margin-left: 24px; }
.dev + .dev svg { width: 15px; height: 26px; margin-top: -1px; }
.dev-on { position: relative; }
.dev-on::after { content: ""; position: absolute; left: 2px; right: 0; bottom: 6px; height: 3px; background: #117865; }
.pg-arrow { font-size: 11px; color: #222; margin: 12px 0 0 17px; }
.pg-arrow-off { color: #c8c6c4; margin-left: 17px; }
.tabs { flex: 1; display: flex; margin-left: 11px; border-left: 1px solid #d2d0ce; }
.tab { display: flex; align-items: center; justify-content: center; border-right: 1px solid #d2d0ce; font-size: 14.500px; letter-spacing: -.2px; white-space: nowrap; position: relative; }
.t1 { width: 259px; } .t2 { width: 264px; } .t3 { width: 81px; } .t4 { width: 177px; } .t5 { width: 105px; } .t6 { width: 115px; } .t7 { width: 100px; } .t8 { width: 97px; border-right: 0; }
.tab-on { font-weight: 600; border-bottom: 5px solid #117865; border-right: 0; }
.tab-x { position: absolute; right: 8px; top: 2px; font-style: normal; font-weight: 400; font-size: 12px; }
.addtab { width: 49px; flex: none; background: #117865; display: flex; align-items: center; justify-content: center; }
.addtab svg { width: 15px; height: 15px; stroke: #fff; stroke-width: 3.200; fill: none; }

/* visualizations */
.viz { width: 227px; flex: none; background: #f3f2f1; border-left: 1px solid #dcdad8; border-right: 1px solid #dcdad8; padding-top: 16px; }
.pane-head { display: flex; align-items: center; justify-content: space-between; height: 24px; padding: 0 9px 0 10px; }
.pane-head h3 { margin: 0; font-size: 18.700px; font-weight: 600; letter-spacing: -.1px; }
.build-label { margin: 10px 0 0 10px; font-size: 14.200px; font-weight: 600; line-height: 20px; color: #333; letter-spacing: -.1px; }
.build-row { display: flex; margin: 4px 0 0 10px; height: 40px; }
.build-btn { width: 40px; height: 40px; display: flex; align-items: center; justify-content: center; }
.build-btn svg { width: 32px; height: 32px; }
.build-on { background: #d2d0ce; border-radius: 2px; }
.build-fmt { margin-left: 48px; }
.viz-rule { margin-top: 15px; height: 1px; background: #a19f9d; position: relative; }
.viz-rule::after { content: ""; position: absolute; left: 24px; top: -6px; width: 11px; height: 11px; transform: rotate(45deg); border-left: 1px solid #a19f9d; border-top: 1px solid #a19f9d; background: #f3f2f1; }
.viz-grid { display: grid; grid-template-columns: repeat(6, 35px); grid-auto-rows: 35px; margin: 9px 0 0 8px; justify-items: center; align-items: center; }
.vi { width: 23px; height: 23px; fill: none; stroke: #555; stroke-width: 1.200; overflow: visible; }
.vi .b { fill: #68aee8; stroke: #1f79c8; }
.vi .bf { fill: #68aee8; stroke: none; }
.vi .bd { fill: #68aee8; stroke: #1f6fb0; stroke-width: 1.800; }
.vi .g { fill: #c8c6c4; stroke: #777; }
.vi .w { fill: #f3f2f1; stroke: #555; }
.vi .o { fill: #f59a23; stroke: #c75b12; stroke-width: .8; }
.vi .sq { fill: #444; stroke: none; }
.vi .gr { fill: #3aa55d; stroke: none; }
.vi .grn { fill: #3aa55d; stroke: none; }
.vi .red { fill: #d13438; stroke: none; }
.vi .az1 { fill: #2f8fdc; stroke: none; }
.vi .az2 { fill: #0f6cbd; stroke: none; }
.vi .thick-b { stroke: #2b88d8; stroke-width: 2; }
.vi-purple { stroke: #8f3fa8; stroke-width: 1.500; }
.vi-flow { stroke: #1f79c8; stroke-width: 1.500; }
.vi-num { fill: #3a94dc; stroke: none; font: 400 10.500px "Open Sans", sans-serif; text-anchor: middle; }
.vi-r { fill: #1f79c8; stroke: none; font: 700 23px "Open Sans", sans-serif; text-anchor: middle; }
.vi-py { fill: #1f79c8; stroke: none; font: 700 21px "Open Sans", sans-serif; text-anchor: middle; }
.viz-more { margin: 2px 0 0 15px; height: 21px; font-weight: 700; font-size: 16px; line-height: 21px; letter-spacing: 1.500px; color: #444; }
.viz-fields { margin-top: 15px; border-top: 1px solid #dcdad8; padding: 0 6px; }
.fld-label { font-size: 14.200px; line-height: 20px; padding-left: 9px; letter-spacing: -.1px; }
.fld-values { margin-top: 12px; }
.fld-drill { margin-top: 14px; font-weight: 600; color: #3b3a39; }
.dropbox { margin-top: 6px; height: 35px; background: #fff; border: 1px dashed #c8c6c4; font-size: 14.200px; display: flex; align-items: center; padding-left: 13px; letter-spacing: -.1px; white-space: nowrap; }
.dropbox-drill { margin-top: 13px; height: 32px; padding-left: 10px; }
.toggle-row { display: flex; align-items: center; height: 20px; margin-top: 14px; padding: 0 20px 0 9px; justify-content: space-between; font-size: 14.200px; letter-spacing: -.1px; }
.tr-first { margin-top: 11px; }
.toggle { width: 40px; height: 20px; border: 1px solid #8a8886; border-radius: 10px; font-size: 10.500px; color: #605e5c; display: flex; align-items: center; justify-content: flex-end; padding-right: 6px; position: relative; background: #fff; }
.toggle::before { content: ""; position: absolute; left: 5px; top: 4px; width: 10px; height: 10px; border-radius: 50%; background: #605e5c; }
.toggle-on { background: #117865; border-color: #117865; color: #fff; justify-content: flex-start; padding: 0 0 0 5px; }
.toggle-on::before { left: auto; right: 5px; background: #fff; }

/* data */
.data { flex: 1; background: #f3f2f1; padding-top: 16px; }
.data-search { margin: 20px 5px 0 6px; height: 30px; background: #fff; border: 1px solid #d2d0ce; border-bottom-color: #8a8886; border-radius: 4px; display: flex; align-items: center; padding-left: 14px; color: #605e5c; font-size: 16px; }
.data-search svg { width: 17px; height: 17px; fill: none; stroke: #605e5c; stroke-width: 1.300; margin-right: 10px; }
.tree { list-style: none; margin: 11px 0 0; padding: 0 0 0 18px; }
.tree li { height: 30px; display: flex; align-items: center; font-size: 14.200px; color: #444; white-space: nowrap; letter-spacing: -.1px; }
.tree-chev { width: 10px; height: 16px; fill: none; stroke: #555; stroke-width: 1.200; flex: none; }
.tree-ic { width: 18px; height: 18px; fill: none; stroke: #444; stroke-width: 1.300; flex: none; margin: 0 6px 0 7px; }

/* status */
.status { flex: 1; background: #f3f2f1; border-top: 1px solid #dcdad8; display: flex; align-items: center; justify-content: space-between; padding: 3px 5px 0; font-size: 13.500px; color: #605e5c; letter-spacing: -.1px; white-space: nowrap; }
.page-count { color: #444; }
.zoomer { display: flex; align-items: center; }
.z-minus { font-weight: 700; margin-right: 6px; }
.z-track { width: 125px; height: 1px; background: #605e5c; position: relative; }
.z-thumb { position: absolute; left: 48px; top: -7px; width: 5px; height: 14px; background: #605e5c; }
.z-tick { position: absolute; left: 62px; top: -3px; width: 1px; height: 7px; background: #605e5c; }
.z-plus { font-size: 17px; font-weight: 700; margin-left: 7px; }
.z-val { margin-left: 16px; font-size: 14.500px; }
.z-fit { width: 20px; height: 20px; fill: none; stroke: #444; stroke-width: 1.200; margin: 0 17px 0 25px; }
.z-update { width: 240px; font-size: 14.500px; }
```

FILE: charts.js
```javascript
(function () {
  function rng(seed) {
    return function () {
      seed = (seed + 0x6d2b79f5) | 0;
      var t = Math.imul(seed ^ (seed >>> 15), 1 | seed);
      t = (t + Math.imul(t ^ (t >>> 7), 61 | t)) ^ t;
      return ((t ^ (t >>> 14)) >>> 0) / 4294967296;
    };
  }

  function spikes(base, start, end, list, w) {
    var pts = [[start, base]];
    list.forEach(function (s) {
      var half = s[2] || w;
      pts.push([s[0] - half, base], [s[0], s[1]], [s[0] + half, base]);
    });
    pts.push([end, base]);
    return pts;
  }

  function smooth(pts, passes) {
    var out = pts;
    for (var n = 0; n < passes; n++) {
      out = out.map(function (p, i) {
        var a = out[Math.max(0, i - 1)], b = out[Math.min(out.length - 1, i + 1)];
        return [p[0], (a[1] + 2 * p[1] + b[1]) / 4];
      });
    }
    return out;
  }

  function weekly(opts) {
    var r = rng(opts.seed), line = [], top = [], bottom = [], i = 0;
    for (var x = opts.from; x <= opts.to; x += opts.step, i++) {
      var y = opts.value(x, i, r);
      var c = opts.center ? opts.center(x) : y;
      line.push([x, y]);
      top.push([x, c - opts.up(x, r)]);
      bottom.push([x, c + opts.down(x, r)]);
    }
    (opts.over || []).forEach(function (s) {
      var best = 0, dist = 1e9;
      line.forEach(function (p, k) {
        var d = Math.abs(p[0] - s[0]);
        if (d < dist) { dist = d; best = k; }
      });
      line[best][1] = s[1];
    });
    return { line: line, top: smooth(top, 1), bottom: smooth(bottom, 1) };
  }

  var avgWeight = weekly({
    seed: 41, from: 303, to: 1436, step: 3.45,
    value: function (x, i, r) {
      var b = x < 1130 ? 408 : 440;
      return b - 20 * Math.sin((i * 2 * Math.PI) / 7) + (r() - 0.5) * 24;
    },
    center: function (x) { return x < 1130 ? 400 : 440; },
    up: function (x, r) { return 22 + r() * 42; },
    down: function (x, r) { return 18 + r() * 42; },
    over: [[310, 425], [361, 358], [427, 290], [467, 296], [481, 490], [515, 300], [608, 270], [613, 460], [638, 485], [659, 462], [736, 310], [714, 332], [787, 490], [832, 310], [858, 345], [900, 345], [973, 300], [1045, 347], [1090, 305], [1112, 325], [1128, 455], [1140, 482], [1210, 378], [1280, 350], [1300, 350], [1345, 392], [1370, 378], [1417, 376], [1436, 416]]
  });
  var avgWeightLine = [[212, 610], [215, 487], [220, 655], [225, 600], [229, 380], [235, 360], [239, 320], [246, 505], [249, 318], [253, 395], [257, 360], [262, 370], [270, 375], [275, 392], [283, 395], [286, 500], [290, 275], [296, 410]].concat(avgWeight.line);

  var weight = weekly({
    seed: 17, from: 170, to: 1412, step: 3.45,
    value: function (x, i, r) {
      var calm = x > 790 && x < 1060;
      if (x < 190) return 630 - (x - 170) * 1.5 + r() * 8;
      if (!calm && r() < 0.36) return 502 + r() * 14;
      if (calm && r() < 0.05) return 550 + r() * 20;
      return 590 + (r() - 0.45) * (calm ? 18 : 30);
    },
    center: function () { return 588; },
    up: function (x, r) { return (x > 790 && x < 1060 ? 30 : 40) + r() * 50; },
    down: function (x, r) { return 25 + r() * 50; },
    over: [[243, 325], [270, 325], [275, 325], [321, 325], [365, 385], [427, 268], [458, 325], [628, 335], [785, 288], [840, 500], [855, 484], [885, 552], [930, 502], [937, 530], [945, 540], [962, 503], [1117, 435], [1162, 385], [1200, 365], [1214, 435], [1308, 335], [1321, 325], [1332, 325], [1400, 325], [1406, 485], [1412, 580]]
  });

  var fareNoise = weekly({
    seed: 9, from: 792, to: 1405, step: 1.97,
    value: function (x, i, r) {
      var b = x < 920 ? 386 - (x - 792) * 0.04 : 364 - (x > 1000 && x < 1150 ? 5 : 0);
      var wave = i % 7 === 0 ? -13 : i % 7 === 1 ? -5 : i % 7 === 6 ? -3 : 4;
      return b + wave + (r() - 0.5) * 6;
    },
    center: function (x) { return x < 920 ? 378 : 358; },
    up: function (x, r) { return 16 + r() * 14; },
    down: function (x, r) { return 16 + r() * 18; },
    over: [[790, 362], [920, 340], [1006, 388], [1003, 328], [1100, 318], [1135, 322], [1148, 322]]
  });
  var fareEarly = [[118, 321], [222, 347], [230, 405], [234, 186], [260, 225], [290, 320], [324, 385], [473, 236], [476, 465], [622, 345], [697, 455], [745, 355]];
  var fareLine = [[745, 355], [749, 418], [751, 370], [778, 385], [778, 335], [783, 400]].concat(fareNoise.line, [[1412, 365], [1418, 310], [1423, 345], [1431, 340], [1436, 320], [1445, 296], [1450, 335], [1458, 300], [1462, 325], [1470, 315], [1478, 332], [1484, 276]]);
  var fareTop = [[118, 303], [225, 338], [234, 183], [262, 215], [295, 310], [324, 355], [473, 222], [476, 330], [622, 335], [697, 425], [745, 335], [785, 350]].concat(fareNoise.top, [[1420, 320], [1450, 310], [1484, 300]]);
  var fareBottom = [[118, 355], [225, 380], [234, 200], [258, 250], [290, 345], [324, 400], [473, 255], [476, 375], [622, 365], [697, 465], [745, 380], [785, 405]].concat(fareNoise.bottom, [[1420, 375], [1450, 380], [1484, 380]]);

  var CHARTS = {
    delivery: {
      ox: 70, oy: 195, sx: 2.306, xFrom: 160, xTo: 1447, yFrom: 197, yTo: 627, yLabelX: 136, xLabelY: 675,
      h: [[197, '600'], [341, '400'], [485, '200']],
      v: [[328, 'May 2024'], [536, 'Jul 2024'], [746, 'Sep 2024'], [954, 'Nov 2024'], [1162, 'Jan 2025'], [1362, 'Mar 2025']],
      lineClass: 'series-thin',
      line: spikes(627, 182, 1425, [[193, 612, 3], [200, 375], [214, 562, 3], [219, 608, 3], [233, 605, 3], [240, 604, 3], [247, 603, 3], [275, 620], [310, 590], [410, 567], [416, 605, 4], [460, 622], [540, 610], [582, 532], [600, 620], [612, 618], [632, 600], [653, 495], [667, 607], [690, 405], [796, 580], [806, 620], [819, 618], [830, 478], [843, 475], [853, 610], [872, 272, 3], [891, 268, 3], [899, 600], [1007, 535], [1013, 562, 3], [1190, 600], [1350, 622], [1363, 623], [1400, 618]], 5),
      pins: [[200, 370], [582, 525], [653, 490], [690, 398], [830, 472], [844, 469], [868, 270], [874, 268], [891, 262], [1007, 527]]
    },
    avgDelivery: {
      ox: 730, oy: 195, sx: 2.306, xFrom: 137, xTo: 1425, yFrom: 198, yTo: 630, yLabelX: 115, xLabelY: 675,
      h: [[254, '6'], [403, '4'], [550, '2']],
      v: [[308, 'May 2024'], [518, 'Jul 2024'], [730, 'Sep 2024'], [940, 'Nov 2024'], [1149, 'Jan 2025'], [1350, 'Mar 2025']],
      lineClass: 'series-thin',
      top: [[162, 612], [1413, 612]], bottom: [[162, 632], [1413, 632]],
      line: spikes(624, 162, 1413, [[173, 580, 3], [180, 270, 4], [192, 605], [215, 618], [278, 585], [392, 580], [409, 580], [563, 603], [635, 595], [673, 608], [814, 608], [827, 615, 3], [856, 585], [876, 510, 4], [992, 612], [1120, 622], [1280, 622]], 5),
      pins: [[179, 264], [391, 574], [409, 572], [563, 596], [635, 588], [673, 601], [814, 601], [858, 587], [875, 505]]
    },
    avgWeight: {
      ox: 70, oy: 445, sx: 2.306, xFrom: 165, xTo: 1452, yFrom: 197, yTo: 650, yLabelX: 165, xLabelY: 700,
      h: [[200, '16,000'], [299, '14,000'], [398, '12,000'], [497, '10,000'], [597, '8,000']],
      v: [[355, 'May 2024'], [560, 'Jul 2024'], [768, 'Sep 2024'], [973, 'Nov 2024'], [1177, 'Jan 2025'], [1376, 'Mar 2025']],
      top: avgWeight.top, bottom: avgWeight.bottom, line: avgWeightLine,
      pins: [[289, 268], [427, 282], [467, 288], [608, 265], [975, 292], [1089, 297], [1112, 317]]
    },
    weight: {
      ox: 730, oy: 445, sx: 2.306, xFrom: 147, xTo: 1435, yFrom: 195, yTo: 660, yLabelX: 127, xLabelY: 705,
      h: [[194, '70K'], [292, '60K'], [390, '50K'], [487, '40K'], [584, '30K']],
      v: [[316, 'May 2024'], [524, 'Jul 2024'], [735, 'Sep 2024'], [942, 'Nov 2024'], [1149, 'Jan 2025'], [1351, 'Mar 2025']],
      top: weight.top, bottom: weight.bottom, line: weight.line,
      pins: [[243, 320], [321, 319], [427, 262], [457, 319], [627, 328], [784, 282], [1162, 378], [1200, 358], [1332, 319], [1400, 319]],
      cursor: { x: 1264, from: 188, to: 660, dot: 505 }
    },
    fare: {
      ox: 210, oy: 705, sx: 1.452, xFrom: 100, xTo: 1495, yFrom: 190, yTo: 560, yLabelX: 90, xLabelY: 591, small: true,
      h: [[310, '0.1bn'], [497, '0.0bn']],
      v: [[269, 'Jul 2023'], [447, 'Oct 2023'], [626, 'Jan 2024'], [802, 'Apr 2024'], [978, 'Jul 2024'], [1156, 'Oct 2024'], [1334, 'Jan 2025']],
      top: fareTop, bottom: fareBottom, line: fareLine, lead: fareEarly,
      dots: [[230, 433], [475, 495], [749, 447], [783, 427], [868, 416], [1025, 309], [1052, 301], [1100, 290], [1119, 296], [1134, 295], [1147, 295], [1418, 280], [1432, 288], [1445, 265], [1483, 250]]
    }
  };

  var PIN = 'M0 0C-1.500-3-5.800-5-5.800-8.300A5.800 5.800 0 1 1 5.800-8.300C5.800-5 1.500-3 0 0Z';

  function render(svg, c) {
    var rect = svg.getBoundingClientRect();
    svg.setAttribute('viewBox', rect.left + ' ' + rect.top + ' ' + rect.width + ' ' + rect.height);
    var X = function (z) { return +(c.ox + z / c.sx).toFixed(1); };
    var Y = function (z) { return +(c.oy + z / 3).toFixed(1); };
    var path = function (pts) {
      return pts.map(function (p) { return X(p[0]) + ',' + Y(p[1]); }).join(' ');
    };
    var labelClass = 'axis-label' + (c.small ? ' axis-sm' : '');
    var out = '';
    c.h.forEach(function (g) {
      out += '<line class="grid-line" x1="' + X(c.xFrom) + '" x2="' + X(c.xTo) + '" y1="' + Y(g[0]) + '" y2="' + Y(g[0]) + '"/>';
      out += '<text class="' + labelClass + '" text-anchor="end" x="' + X(c.yLabelX) + '" y="' + (Y(g[0]) + 4.500) + '">' + g[1] + '</text>';
    });
    c.v.forEach(function (g) {
      out += '<line class="grid-line" x1="' + X(g[0]) + '" x2="' + X(g[0]) + '" y1="' + Y(c.yFrom) + '" y2="' + Y(c.yTo) + '"/>';
      out += '<text class="' + labelClass + '" text-anchor="middle" x="' + X(g[0]) + '" y="' + Y(c.xLabelY) + '">' + g[1] + '</text>';
    });
    if (c.top) {
      out += '<polygon class="series-band" points="' + path(c.top.concat(c.bottom.slice().reverse())) + '"/>';
    }
    if (c.lead) {
      out += '<polyline class="series-line series-thick" points="' + path(c.lead) + '"/>';
    }
    out += '<polyline class="series-line ' + (c.lineClass || '') + '" points="' + path(c.line) + '"/>';
    if (c.cursor) {
      out += '<line class="cursor" x1="' + X(c.cursor.x) + '" x2="' + X(c.cursor.x) + '" y1="' + Y(c.cursor.from) + '" y2="' + Y(c.cursor.to) + '"/>';
      out += '<circle class="cursor-dot" cx="' + X(c.cursor.x) + '" cy="' + Y(c.cursor.dot) + '" r="4"/>';
    }
    (c.pins || []).forEach(function (p) {
      out += '<path class="pin" transform="translate(' + X(p[0]) + ' ' + Y(p[1]) + ')" d="' + PIN + '"/>';
    });
    (c.dots || []).forEach(function (p) {
      out += '<circle class="pin" cx="' + X(p[0]) + '" cy="' + Y(p[1]) + '" r="5"/>';
    });
    svg.innerHTML = out;
  }

  document.querySelectorAll('svg[data-chart]').forEach(function (svg) {
    render(svg, CHARTS[svg.getAttribute('data-chart')]);
  });
})();
```
